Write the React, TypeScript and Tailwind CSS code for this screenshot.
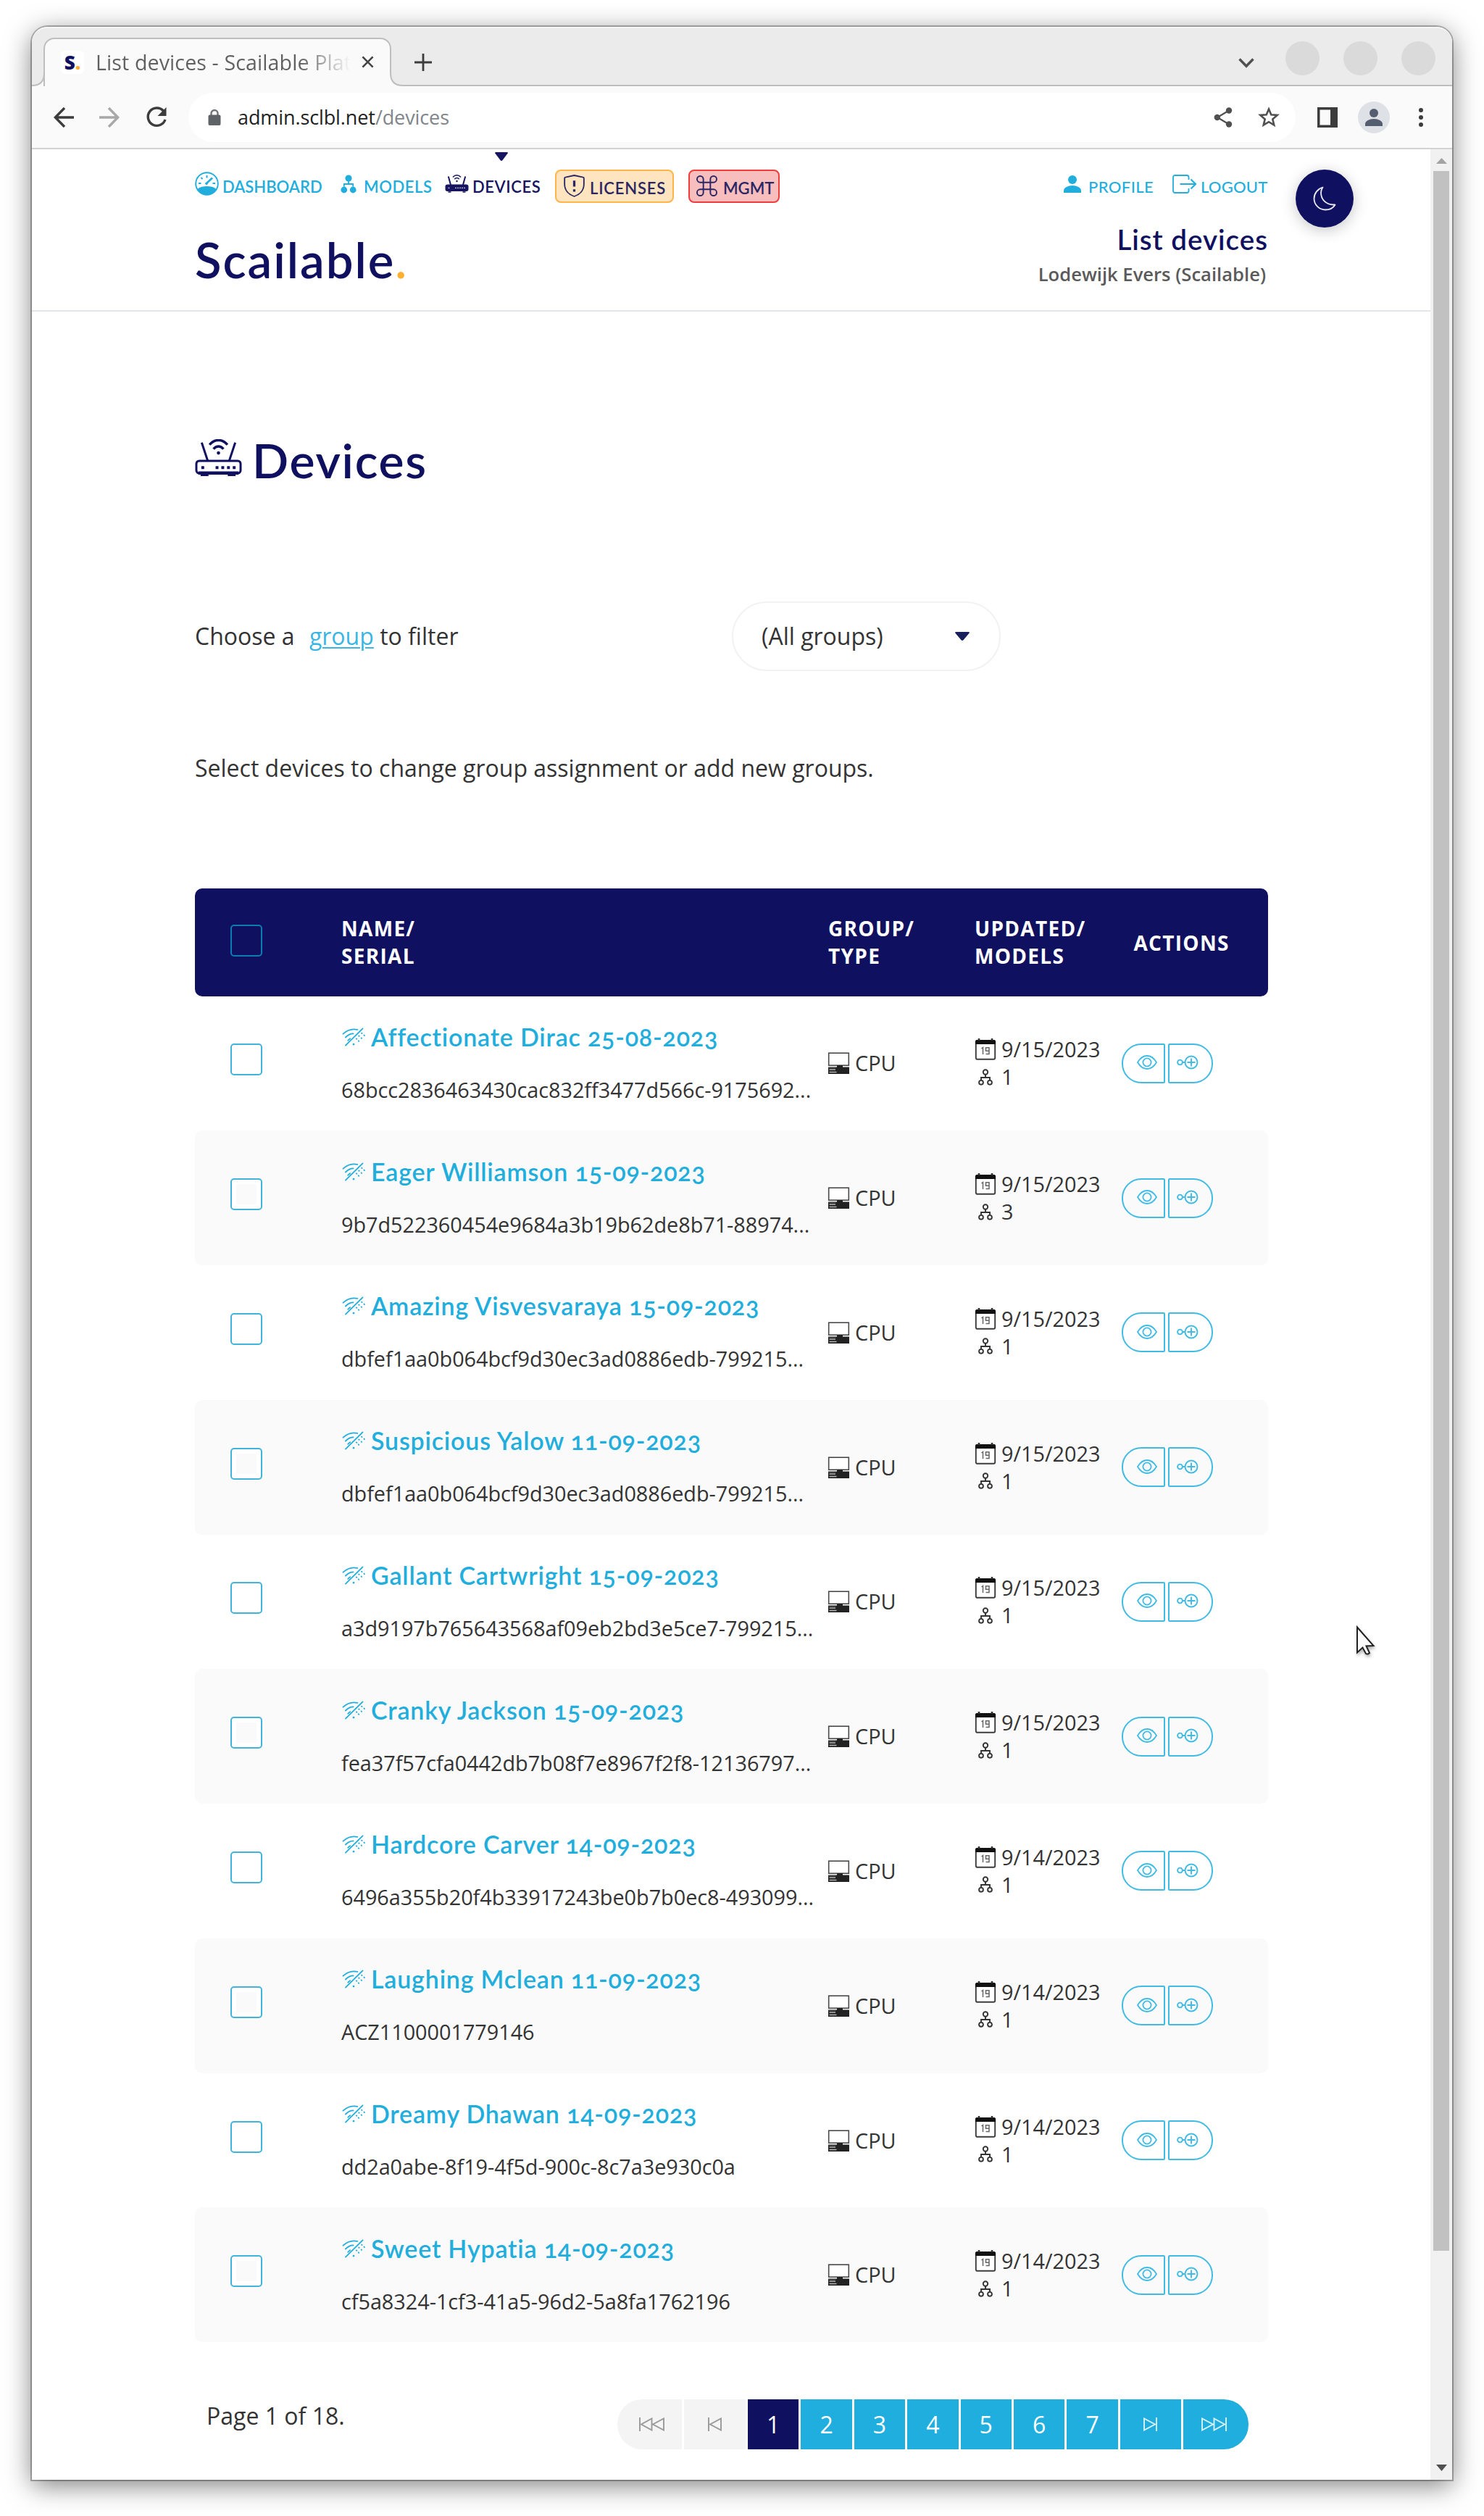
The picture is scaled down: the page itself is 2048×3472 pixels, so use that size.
import React from "react";

type IconProps = { className?: string };

/* ---------- browser chrome icons ---------- */

const CloseIcon = ({ className }: IconProps) => (
  <svg className={className} viewBox="0 0 18 18" fill="none" stroke="#444" strokeWidth="2.8">
    <path d="M1.5 1.5l15 15M16.5 1.5l-15 15" />
  </svg>
);
const PlusIcon = ({ className }: IconProps) => (
  <svg className={className} viewBox="0 0 24 24" fill="none" stroke="#3c3c3c" strokeWidth="2.8">
    <path d="M12 0v24M0 12h24" />
  </svg>
);
const ChevronIcon = ({ className }: IconProps) => (
  <svg className={className} viewBox="0 0 22 14" fill="none" stroke="#505050" strokeWidth="3.4">
    <path d="M1.5 1.5L11 11.2l9.500-9.700" />
  </svg>
);
const ArrowIcon = ({ className }: IconProps) => (
  <svg className={className} viewBox="0 0 28 28" fill="none" stroke="currentColor" strokeWidth="3.4">
    <path d="M28 14H2.500M15 1L2.300 14 15 27" />
  </svg>
);
const ReloadIcon = ({ className }: IconProps) => (
  <svg className={className} viewBox="0 0 30 30" fill="none">
    <path d="M24.500 6A12.200 12.200 0 1 0 27 18" stroke="#3c3c3c" strokeWidth="3.400" />
    <path d="M28.500 1v12H16.500z" fill="#3c3c3c" />
  </svg>
);
const LockIcon = ({ className }: IconProps) => (
  <svg className={className} viewBox="0 0 18 24" fill="none">
    <path d="M4.500 10V6.500a4.500 4.500 0 0 1 9 0V10" stroke="#70757a" strokeWidth="2.400" />
    <rect x="0.500" y="8.500" width="17" height="14.500" rx="2" fill="#5f6368" />
  </svg>
);
const ShareIcon = ({ className }: IconProps) => (
  <svg className={className} viewBox="0 0 26 28" fill="#505050">
    <path d="M21 4.500L5 14l16 9.500" fill="none" stroke="#505050" strokeWidth="2.200" />
    <circle cx="21" cy="4.500" r="4.200" />
    <circle cx="4.800" cy="14" r="4.200" />
    <circle cx="21" cy="23.500" r="4.200" />
  </svg>
);
const StarIcon = ({ className }: IconProps) => (
  <svg className={className} viewBox="0 0 30 29" fill="none" stroke="#505050" strokeWidth="2.600">
    <path d="M15 3.500l3.300 7.700 8.400.7-6.400 5.500 1.950 8.200L15 21.250 7.750 25.600l1.950-8.200-6.400-5.500 8.400-.7z" />
  </svg>
);
const PanelIcon = ({ className }: IconProps) => (
  <svg className={className} viewBox="0 0 28 28">
    <rect width="28" height="28" fill="#3c3c3c" />
    <rect x="3.500" y="3.500" width="14.500" height="21" fill="#fafafa" />
  </svg>
);
const PersonIcon = ({ className }: IconProps) => (
  <svg className={className} viewBox="0 0 24 24" fill="currentColor">
    <circle cx="12" cy="6" r="6" />
    <path d="M0 24v-3c0-4 6-7 12-7s12 3 12 7v3z" />
  </svg>
);
const DotsIcon = ({ className }: IconProps) => (
  <svg className={className} viewBox="0 0 6 26" fill="#3c3c3c">
    <circle cx="3" cy="3" r="3" />
    <circle cx="3" cy="13" r="3" />
    <circle cx="3" cy="23" r="3" />
  </svg>
);

/* ---------- application icons ---------- */

const GaugeIcon = ({ className }: IconProps) => (
  <svg className={className} viewBox="0 0 33 33" fill="none" stroke="currentColor">
    <circle cx="16.500" cy="16.500" r="15.300" strokeWidth="1.900" />
    <path d="M3.200 24.200C7 20.800 11.500 20 16.500 20s9.500.8 13.300 4.200A15.300 15.300 0 0 1 16.500 31.800 15.300 15.300 0 0 1 3.200 24.200z" fill="currentColor" stroke="none" />
    <path d="M15.500 16.500L24 8.500" strokeWidth="2.600" />
    <path d="M16.500 5v3.500M8.500 8l2 2.200M5 16h3.500M24.500 16H28" strokeWidth="2" />
    <circle cx="16" cy="16.300" r="1.800" fill="currentColor" stroke="none" />
  </svg>
);
const TreeSolidIcon = ({ className }: IconProps) => (
  <svg className={className} viewBox="0 0 22 26" fill="currentColor">
    <circle cx="11" cy="5" r="4.600" />
    <circle cx="4.800" cy="21" r="4.400" />
    <circle cx="17.200" cy="21" r="4.400" />
    <path d="M11 9v4M4.800 16.500V13h12.400v3.500" fill="none" stroke="currentColor" strokeWidth="1.800" />
  </svg>
);
const TreeOutlineIcon = ({ className }: IconProps) => (
  <svg className={className} viewBox="0 0 20 23" fill="none" stroke="currentColor" strokeWidth="1.900">
    <circle cx="10" cy="4.500" r="3.200" />
    <circle cx="4" cy="18.800" r="2.900" />
    <circle cx="16" cy="18.800" r="2.900" />
    <path d="M10 8v4M4 15.500V12h12v3.500" />
  </svg>
);
const RouterSolidIcon = ({ className }: IconProps) => (
  <svg className={className} viewBox="0 0 33 26" fill="none" stroke="currentColor">
    <rect x="0.500" y="14.500" width="32" height="9.500" rx="3" fill="currentColor" stroke="none" />
    <path d="M4.500 25h4M24.500 25h4" strokeWidth="1.600" />
    <path d="M4.800 3.500L8 15M28.200 3.500L25 15" strokeWidth="2" />
    <path d="M11 4.500c3.200-3.600 7.800-3.600 11 0M13.300 7.200c2-2.200 4.400-2.200 6.400 0" strokeWidth="1.600" />
    <circle cx="16.500" cy="10" r="1.200" fill="currentColor" stroke="none" />
    <path d="M4.500 19.300h2.200M14 19.300h14" stroke="#fff" strokeWidth="1.300" strokeDasharray="2 1" opacity="0.75" />
  </svg>
);
const RouterOutlineIcon = ({ className }: IconProps) => (
  <svg className={className} viewBox="0 0 66 52" fill="none" stroke="currentColor">
    <rect x="2" y="30" width="62" height="17.500" rx="4" strokeWidth="3" />
    <path d="M5 47h56" strokeWidth="4.500" />
    <path d="M8 50h11M46 50h11" strokeWidth="3" />
    <path d="M9.500 4.500L18 30M56.500 4.500L48 30" strokeWidth="3" />
    <path d="M20.500 7.500C27-1 39-1 45.500 7.500M26 13.500c4-5 10-5 14 0" strokeWidth="3.500" />
    <circle cx="33" cy="19" r="2.400" fill="currentColor" stroke="none" />
    <path d="M9 39.500h4M29 39.500h4M37 39.500h4M45 39.500h4M53 39.500h4" strokeWidth="4" />
  </svg>
);
const ShieldIcon = ({ className }: IconProps) => (
  <svg className={className} viewBox="0 0 30 33" fill="none" stroke="currentColor">
    <path d="M15 1.500L27.500 4.200c.9 0 1.300.7 1.300 1.500V14c0 9-6 15-13.800 17.500C7.200 29 1.200 23 1.200 14V5.700c0-.8.4-1.500 1.300-1.500z" strokeWidth="1.900" />
    <path d="M15 9v8.500M15 21.300v3.400" strokeWidth="3.400" />
  </svg>
);
const CommandIcon = ({ className }: IconProps) => (
  <svg className={className} viewBox="0 0 30 30" fill="none" stroke="currentColor" strokeWidth="2">
    <path d="M10 10V5.500A4.500 4.500 0 1 0 5.500 10h19A4.500 4.500 0 1 0 20 5.500v19a4.500 4.500 0 1 0 4.500-4.500h-19a4.500 4.500 0 1 0 4.500 4.500V10" />
  </svg>
);
const LogoutIcon = ({ className }: IconProps) => (
  <svg className={className} viewBox="0 0 34 26" fill="none" stroke="currentColor" strokeWidth="1.800">
    <path d="M22.500 7V3.500A2.500 2.500 0 0 0 20 1H3.500A2.500 2.500 0 0 0 1 3.500v19A2.500 2.500 0 0 0 3.500 25H20a2.500 2.500 0 0 0 2.500-2.500V19" />
    <path d="M10.500 13H32M25.500 6.500L32 13l-6.500 6.500" strokeWidth="2.100" />
  </svg>
);
const MoonIcon = ({ className }: IconProps) => (
  <svg className={className} viewBox="0 0 32 34" fill="none" stroke="#e9e9f5" strokeWidth="1.800" strokeLinejoin="round">
    <path d="M13.500 1.500C6.500 3.500 1.500 10 1.500 17c0 8.500 7 15.500 15.500 15.500 6 0 11-2.500 13.500-7-1-.3-1 0-2.500 0C18 25.500 11 18 11 9c0-3 1-5.500 2.500-7.500z" />
  </svg>
);
const WifiSlashIcon = ({ className }: IconProps) => (
  <svg className={className} viewBox="0 0 33 27" fill="none" stroke="currentColor" strokeWidth="1.900" strokeLinecap="round">
    <path d="M5 25.500L29.500 1.500" />
    <path d="M1.500 9C8 2.800 15 1.400 22 3" />
    <path d="M5 14c4-4 7.500-5.300 11-5.300" />
    <path d="M8.500 18.500c1-1.300 2-2.100 3-2.700" />
    <path d="M28 8l.5.300M31.500 11l.5.500M24 12l.5.300M27.500 15l.5.500M20.500 16l.5.300M23.500 19l.5.500" />
    <circle cx="16.500" cy="24" r="1.500" fill="currentColor" stroke="none" />
  </svg>
);
const ComputerIcon = ({ className }: IconProps) => (
  <svg className={className} viewBox="0 0 30 30">
    <rect x="1.200" y="1.200" width="27.600" height="17" fill="#fff" stroke="#4a4a4a" strokeWidth="1.600" />
    <path d="M0.500 20.500h12V18h8v2.500h9V30h-29z" fill="#222" />
    <path d="M2 24h8.500M2 27.500h10" stroke="#b5b5b5" strokeWidth="1.700" />
    <path d="M1 21h10" stroke="#777" strokeWidth="1.200" />
  </svg>
);
const CalendarIcon = ({ className }: IconProps) => (
  <svg className={className} viewBox="0 0 30 30">
    <rect x="1.800" y="3" width="26.400" height="25.800" rx="2" fill="#fff" stroke="#3c3c3c" strokeWidth="1.900" />
    <path d="M1 8V4.500A2.500 2.500 0 0 1 3.500 2h23A2.500 2.500 0 0 1 29 4.500V8z" fill="#111" />
    <path d="M6 0v3M24 0v3" stroke="#333" strokeWidth="2.600" />
    <path d="M9.500 14l2-1.500V22M15.500 12.800h4.500v4.400h-4.500zM20 17v4.500h-4.500" fill="none" stroke="#666" strokeWidth="1.500" />
  </svg>
);
const EyeIcon = ({ className }: IconProps) => (
  <svg className={className} viewBox="0 0 28 20" fill="none" stroke="currentColor" strokeWidth="1.800">
    <path d="M1 10C4.500 4 9 1 14 1s9.500 3 13 9c-3.500 6-8 9-13 9S4.500 16 1 10z" />
    <circle cx="14" cy="10" r="5.600" />
  </svg>
);
const ConnectIcon = ({ className }: IconProps) => (
  <svg className={className} viewBox="0 0 30 20" fill="none" stroke="currentColor" strokeWidth="1.900">
    <circle cx="4.500" cy="10" r="3.400" />
    <circle cx="20" cy="10" r="8.500" />
    <path d="M8 10h3.500M14.500 10h11M20 4.500v11" />
  </svg>
);
const PrevIcon = ({ double }: { double?: boolean }) => (
  <svg className={double ? "h-[19px] w-[35px]" : "h-[19px] w-[19px]"} viewBox={double ? "0 0 35 19" : "0 0 19 19"} fill="none" stroke="currentColor" strokeWidth="1.900">
    <path d={double ? "M1 0v19M17.500 1.500v16L3 9.500zM34 1.500v16L19 9.500z" : "M1 0v19M18 1.500v16L3 9.500z"} />
  </svg>
);
const NextIcon = ({ double }: { double?: boolean }) => (
  <svg className={double ? "h-[19px] w-[35px]" : "h-[19px] w-[19px]"} viewBox={double ? "0 0 35 19" : "0 0 19 19"} fill="none" stroke="currentColor" strokeWidth="1.900">
    <path d={double ? "M34 0v19M1 1.500v16L16 9.500zM17.500 1.500v16L32 9.500z" : "M18 0v19M1 1.500v16L16 9.500z"} />
  </svg>
);
const DownTriangle = ({ className }: IconProps) => (
  <svg className={className} viewBox="0 0 20 12" preserveAspectRatio="none" fill="currentColor">
    <path d="M1 0h18q1.500.6.500 1.800l-8 9.400q-1.500 1.400-3 0L.5 1.800Q-.5.600 1 0z" />
  </svg>
);

/* ---------- data ---------- */

const devices = [
  { name: "Affectionate Dirac 25-08-2023", serial: "68bcc2836463430cac832ff3477d566c-9175692...", date: "9/15/2023", models: 1 },
  { name: "Eager Williamson 15-09-2023", serial: "9b7d522360454e9684a3b19b62de8b71-88974...", date: "9/15/2023", models: 3 },
  { name: "Amazing Visvesvaraya 15-09-2023", serial: "dbfef1aa0b064bcf9d30ec3ad0886edb-799215...", date: "9/15/2023", models: 1 },
  { name: "Suspicious Yalow 11-09-2023", serial: "dbfef1aa0b064bcf9d30ec3ad0886edb-799215...", date: "9/15/2023", models: 1 },
  { name: "Gallant Cartwright 15-09-2023", serial: "a3d9197b765643568af09eb2bd3e5ce7-799215...", date: "9/15/2023", models: 1 },
  { name: "Cranky Jackson 15-09-2023", serial: "fea37f57cfa0442db7b08f7e8967f2f8-12136797...", date: "9/15/2023", models: 1 },
  { name: "Hardcore Carver 14-09-2023", serial: "6496a355b20f4b33917243be0b7b0ec8-493099...", date: "9/14/2023", models: 1 },
  { name: "Laughing Mclean 11-09-2023", serial: "ACZ1100001779146", date: "9/14/2023", models: 1 },
  { name: "Dreamy Dhawan 14-09-2023", serial: "dd2a0abe-8f19-4f5d-900c-8c7a3e930c0a", date: "9/14/2023", models: 1 },
  { name: "Sweet Hypatia 14-09-2023", serial: "cf5a8324-1cf3-41a5-96d2-5a8fa1762196", date: "9/14/2023", models: 1 },
];

const columns = "grid grid-cols-[202px_672px_202px_202.500px_200px] items-center";
const heading = "font-['Lato','Open_Sans',sans-serif] oldstyle-nums";

/* ---------- sections ---------- */

function TabStrip() {
  return (
    <div className="flex h-[82px] items-end justify-between rounded-t-[21px] border-t-2 border-b-2 border-t-[#f6f6f6] border-b-[#bebebe] bg-[#ebebeb]">
      <div className="relative -mb-[2px] flex items-end">
        <svg className="h-[18px] w-[18px]" viewBox="0 0 18 18" fill="none">
          <path d="M0 17Q17 17 17 0h1v18H0z" fill="#fafafa" />
          <path d="M0 17Q17 17 17 0" stroke="#bebebe" strokeWidth="2" />
        </svg>
        <div className="-ml-[2px] flex h-[67px] w-[480px] items-center rounded-t-[15px] border-2 border-b-0 border-[#bebebe] bg-[#fafafa] pb-[2px] pl-[22px]">
          <div className="flex h-8 w-8 items-center justify-center rounded-[6px] bg-white font-['Open_Sans',sans-serif] text-[26px] leading-8 font-extrabold text-[#101060]">
            S<span className="text-[#ffb02e]">.</span>
          </div>
          <div className="ml-4 w-[352px] overflow-hidden bg-linear-to-r from-[#606060] from-80% to-transparent bg-clip-text font-['Open_Sans',sans-serif] text-[28.600px] leading-10 tracking-[0.100px] whitespace-nowrap text-transparent">
            List devices - Scailable Plat
          </div>
          <CloseIcon className="ml-[15px] h-[17px] w-[17px]" />
        </div>
        <svg className="-ml-[2px] h-[18px] w-[18px]" viewBox="0 0 18 18" fill="none">
          <path d="M18 17Q1 17 1 0H0v18h18z" fill="#fafafa" />
          <path d="M18 17Q1 17 1 0" stroke="#bebebe" strokeWidth="2" />
        </svg>
        <PlusIcon className="mb-[21px] ml-[16px] h-6 w-6" />
      </div>
      <div className="mr-[23px] mb-[13px] flex items-center">
        <ChevronIcon className="mt-[12px] mr-[43px] h-[14px] w-[22px]" />
        <div className="flex gap-[33px]">
          <div className="h-[47px] w-[47px] rounded-full bg-[#dadada]" />
          <div className="h-[47px] w-[47px] rounded-full bg-[#dadada]" />
          <div className="h-[47px] w-[47px] rounded-full bg-[#dadada]" />
        </div>
      </div>
    </div>
  );
}

function Toolbar() {
  return (
    <div className="flex h-[87px] items-center border-b-2 border-[#d2d2d2] bg-[#fafafa] pl-[30px] text-[#3c3c3c]">
      <ArrowIcon className="h-7 w-7" />
      <ArrowIcon className="ml-[35px] h-7 w-7 -scale-x-100 text-[#a8a8a8]" />
      <ReloadIcon className="ml-[36px] h-[30px] w-[30px]" />
      <div className="ml-[29px] flex h-[68px] w-[1528px] items-center rounded-full bg-white pl-[27px]">
        <LockIcon className="h-6 w-[18px]" />
        <div className="ml-[23px] font-['Open_Sans',sans-serif] text-[27px] leading-10 tracking-[-0.100px] text-[#222]">
          admin.sclbl.net<span className="text-[#80868b]">/devices</span>
        </div>
        <ShareIcon className="ml-auto h-7 w-[26px]" />
        <StarIcon className="mr-[22px] ml-[35px] h-[29px] w-[30px]" />
      </div>
      <PanelIcon className="ml-[30px] h-7 w-7" />
      <div className="ml-[28px] flex h-11 w-11 items-center justify-center rounded-full bg-[#dee1e6] text-[#555e70]">
        <PersonIcon className="h-6 w-6" />
      </div>
      <DotsIcon className="ml-[40px] h-[26px] w-[6px]" />
    </div>
  );
}

function SiteHeader() {
  return (
    <header className="relative flex h-[224px] justify-between border-b-2 border-[#e2e6ea] pr-[224px] pl-[225px]">
      <div>
        <nav className={`${heading} mt-[28px] flex h-[46px] items-center text-[22px] leading-[30px] font-semibold text-[#22aedd]`}>
          <div className="flex w-[201px] items-center pt-[2px] whitespace-nowrap">
            <GaugeIcon className="mr-[5px] -mt-[9px] h-[33px] w-[33px]" />
            <span>DASHBOARD</span>
          </div>
          <div className="flex w-[144px] items-center pt-[2px]">
            <TreeSolidIcon className="mr-[10px] -mt-[8px] h-[26px] w-[22px]" />
            <span className="tracking-[0.600px]">MODELS</span>
          </div>
          <div className="relative flex w-[152px] items-center pt-[2px] text-[#17155f]">
            <DownTriangle className="absolute -top-[31px] left-[69px] h-[12px] w-[18px]" />
            <RouterSolidIcon className="mr-[5px] -mt-[10px] h-[26px] w-[33px]" />
            <span className="tracking-[0.600px]">DEVICES</span>
          </div>
          <div className="flex h-[46px] w-[164px] items-center rounded-[8px] border-2 border-[#ffb547] bg-[#fee4bf] pt-[5px] pl-[10px] text-[#2a2764]">
            <ShieldIcon className="mr-[7px] -mt-[7px] h-[33px] w-[29px]" />
            <span className="tracking-[0.800px]">LICENSES</span>
          </div>
          <div className="ml-[20px] flex h-[46px] w-[126px] items-center rounded-[8px] border-2 border-[#f03c3c] bg-[#f8bdbd] pt-[5px] pl-[9px] text-[#2a2764]">
            <CommandIcon className="mr-[8px] -mt-[7px] h-[29px] w-[29px]" />
            <span>MGMT</span>
          </div>
        </nav>
        <div className={`${heading} mt-[38px] text-[67px] leading-[80px] font-semibold tracking-[2px] text-[#101060]`}>
          Scailable<span className="text-[#ffb02e]">.</span>
        </div>
      </div>
      <div className="flex flex-col items-end">
        <div className={`${heading} mt-[28px] flex h-[46px] w-[282px] items-center pt-[1px] text-[22px] leading-[30px] font-medium text-[#22aedd]`}>
          <div className="flex w-[150px] items-center">
            <PersonIcon className="mr-[10px] -mt-[7px] h-6 w-6" />
            <span className="tracking-[0.400px]">PROFILE</span>
          </div>
          <div className="flex items-center">
            <LogoutIcon className="mr-[5px] -mt-[7px] h-[26px] w-[34px]" />
            <span className="tracking-[0.200px]">LOGOUT</span>
          </div>
        </div>
        <div className={`${heading} mt-[26px] text-[38.500px] leading-[48px] font-semibold tracking-[1px] text-[#101060]`}>
          List devices
        </div>
        <div className="mt-[9px] pr-[3px] text-[25.600px] leading-[32px] font-semibold text-[#5a5a5a]">
          Lodewijk Evers (Scailable)
        </div>
      </div>
      <button className="absolute top-[28px] left-[1744px] flex h-20 w-20 items-center justify-center rounded-full bg-[#101060] shadow-[0_4px_20px_rgba(0,0,0,0.22)]">
        <MoonIcon className="h-[34px] w-[32px]" />
      </button>
    </header>
  );
}

function TableHead() {
  return (
    <div className={`${columns} h-[148.500px] rounded-[10px] bg-[#101060] text-[28px] leading-[38px] font-bold tracking-[1.300px] text-white`}>
      <div className="pb-[4px] pl-[49px]">
        <div className="h-[44px] w-[44px] rounded-[5px] border-2 border-[#0b7db0]" />
      </div>
      <div>NAME/<br />SERIAL</div>
      <div>GROUP/<br />TYPE</div>
      <div>UPDATED/<br />MODELS</div>
      <div className="pt-[2px] pl-[17px]">ACTIONS</div>
    </div>
  );
}

function DeviceRow({ device, striped }: { device: (typeof devices)[number]; striped: boolean }) {
  return (
    <div className={`${columns} h-[185.770px] rounded-[10px] text-[28.800px] leading-[38px] text-[#333] ${striped ? "bg-[#fafafa]" : "bg-white"}`}>
      <div className="pb-[10px] pl-[49px]">
        <div className="h-[44px] w-[44px] rounded-[5px] border-2 border-[#42b4dc] bg-white p-[6px]">
          <div className={`h-full w-full ${striped ? "bg-[#fafafa]" : "bg-white"}`} />
        </div>
      </div>
      <div className="flex flex-col gap-[25px]">
        <div className="flex items-center leading-[48px] text-[#22aedd]">
          <WifiSlashIcon className="mr-[8px] ml-[1px] h-[26px] w-[32px]" />
          <a className={`${heading} text-[34px] font-semibold tracking-[0.800px] whitespace-nowrap`}>{device.name}</a>
        </div>
        <div className="leading-[48px] tracking-[-0.020px] whitespace-nowrap">{device.serial}</div>
      </div>
      <div className="flex items-center">
        <ComputerIcon className="mr-[7px] -ml-[1px] h-[30px] w-[31px]" />
        CPU
      </div>
      <div>
        <div className="flex items-center">
          <CalendarIcon className="mr-[7px] h-[30px] w-[30px]" />
          {device.date}
        </div>
        <div className="flex items-center">
          <TreeOutlineIcon className="mr-[12px] ml-[5px] h-[23px] w-[20px]" />
          {device.models}
        </div>
      </div>
      <div className="flex gap-[4px] text-[#3fbbe4]">
        <div className="flex h-[55px] w-[60px] items-center justify-center rounded-l-[27px] rounded-r-[2px] border-2 border-current pl-[10px]">
          <EyeIcon className="-mt-[2px] h-[20px] w-[28px]" />
        </div>
        <div className="flex h-[55px] w-[62px] items-center justify-center rounded-l-[2px] rounded-r-[27px] border-2 border-current pr-[8px]">
          <ConnectIcon className="-mt-[2px] h-[20px] w-[30px]" />
        </div>
      </div>
    </div>
  );
}

function Pagination() {
  const page = "flex h-[69px] w-[70.400px] items-center justify-center text-white";
  return (
    <div className="mt-[79px] flex items-start">
      <div className="w-[583px] pl-[16px] text-[32px] leading-[45px] text-[#333]">Page 1 of 18.</div>
      <div className="flex gap-[3px] text-[32px] leading-[69px]">
        <div className="flex h-[69px] w-[89px] items-center justify-center rounded-l-[34px] bg-[#f4f4f4] pl-[6px] text-[#999]"><PrevIcon double /></div>
        <div className="flex h-[69px] w-[85px] items-center justify-center bg-[#f4f4f4] text-[#999]"><PrevIcon /></div>
        <div className={`${page} bg-[#101060]`}>1</div>
        {[2, 3, 4, 5, 6, 7].map((n) => (
          <div key={n} className={`${page} bg-[#1faede]`}>{n}</div>
        ))}
        <div className="flex h-[69px] w-[84px] items-center justify-center bg-[#1faede] text-[#d8f2fb]"><NextIcon /></div>
        <div className="flex h-[69px] w-[90px] items-center justify-center rounded-r-[34px] bg-[#1faede] pr-[5px] text-[#d8f2fb]"><NextIcon double /></div>
      </div>
    </div>
  );
}

function Scrollbar() {
  return (
    <div className="flex h-full w-[30px] flex-col items-center bg-[#f1f1f1]">
      <svg className="mt-[12px] h-[8px] w-[15px]" viewBox="0 0 15 8" fill="#a3a3a3"><path d="M7.500 0L15 8H0z" /></svg>
      <div className="mt-[10px] h-[2870px] w-[22px] bg-[#c1c1c1]" />
      <svg className="mt-auto mb-[12px] h-[9px] w-[15px]" viewBox="0 0 15 9" fill="#505050"><path d="M7.500 9L0 0h15z" /></svg>
    </div>
  );
}

export default function App() {
  return (
    <div className="relative h-[3472px] w-[2048px] overflow-hidden bg-white pt-[37px] pl-[44px] font-['Open_Sans','Noto_Sans',sans-serif]">
      <div className="h-[3385px] w-[1960px] rounded-t-[22px] bg-white shadow-[0_0_0_2px_rgba(0,0,0,0.28),0_8px_36px_rgba(0,0,0,0.5)]">
        <TabStrip />
        <Toolbar />
        <div className="flex h-[3216px]">
          <div className="w-[1930px] bg-white">
            <SiteHeader />
            <main className="w-[1706px] pl-[225px] text-[#333]">
              <h1 className={`${heading} mt-[165px] flex items-center text-[66px] leading-[80px] font-semibold tracking-[1.700px] text-[#101060]`}>
                <RouterOutlineIcon className="mr-[14px] -mt-[6px] h-[52px] w-[65px]" />
                Devices
              </h1>
              <div className="mt-[155px] flex h-[96px] items-center text-[32px] leading-[48px]">
                <div className="w-[741px]">
                  Choose a <a className="ml-[12px] text-[#3bb6e2] underline decoration-2 underline-offset-[3px]">group</a> to filter
                </div>
                <div className="flex h-[96px] w-[371px] items-center justify-between rounded-full border-2 border-[#f2f2f2] pr-[41px] pl-[39px]">
                  (All groups)
                  <DownTriangle className="h-[12px] w-[20px] text-[#17205a]" />
                </div>
              </div>
              <p className="mt-[110px] text-[32px] leading-[48px]">Select devices to change group assignment or add new groups.</p>
              <div className="mt-[142px]">
                <TableHead />
                {devices.map((d, i) => (
                  <DeviceRow key={d.name} device={d} striped={i % 2 === 1} />
                ))}
              </div>
              <Pagination />
            </main>
          </div>
          <Scrollbar />
        </div>
      </div>
      <svg className="absolute top-[2242px] left-[1870px] h-[44px] w-[30px] drop-shadow-[1px_3px_2px_rgba(0,0,0,0.3)]" viewBox="0 0 30 44" fill="#fafafa" stroke="#222" strokeWidth="2">
        <path d="M3 3.500v35l7.500-7 4.500 8.500q2.500 1.500 5-1l-4.500-9.500 10-.5z" />
      </svg>
    </div>
  );
}
